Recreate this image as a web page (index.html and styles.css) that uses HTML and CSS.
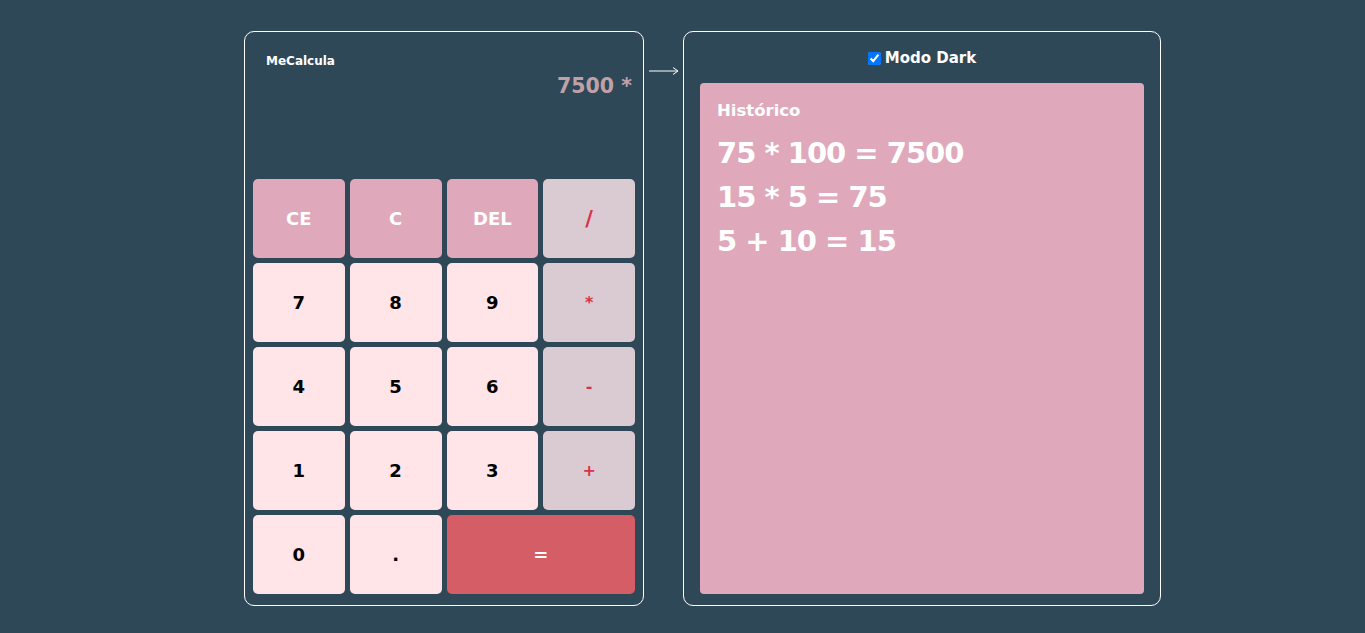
FILE: index.html
```html
<!DOCTYPE html>
<html lang="pt-BR">
<head>
<meta charset="utf-8">
<title>MeCalcula</title>
<link rel="stylesheet" href="styles.css">
</head>
<body>
<main class="page">
  <section class="calc">
    <div class="screen">
      <h1 class="brand">MeCalcula</h1>
      <div class="display">7500 *</div>
    </div>
    <div class="keys">
      <button class="key fn">CE</button>
      <button class="key fn">C</button>
      <button class="key fn">DEL</button>
      <button class="key op slash">/</button>
      <button class="key num">7</button>
      <button class="key num">8</button>
      <button class="key num">9</button>
      <button class="key op">*</button>
      <button class="key num">4</button>
      <button class="key num">5</button>
      <button class="key num">6</button>
      <button class="key op">-</button>
      <button class="key num">1</button>
      <button class="key num">2</button>
      <button class="key num">3</button>
      <button class="key op">+</button>
      <button class="key num">0</button>
      <button class="key num">.</button>
      <button class="key eq">=</button>
    </div>
  </section>
  <div class="arrow">
    <svg width="30" height="10" viewBox="0 0 30 10"><path d="M0 5H29M24 1.5L29 5L24 8.5" fill="none" stroke="#fff" stroke-width="1"/></svg>
  </div>
  <section class="side">
    <label class="mode"><input type="checkbox" checked> Modo Dark</label>
    <div class="history">
      <h2 class="history-title">Histórico</h2>
      <p class="entry">75 * 100 = 7500</p>
      <p class="entry">15 * 5 = 75</p>
      <p class="entry">5 + 10 = 15</p>
    </div>
  </section>
</main>
</body>
</html>
```
FILE: styles.css
```css
* { box-sizing: border-box; }
html, body { margin: 0; padding: 0; }
body {
  background: #2f4858;
  font-family: "DejaVu Sans", "Noto Sans", sans-serif;
  font-weight: bold;
  height: 633px;
  overflow: hidden;
}
.page {
  display: flex;
  align-items: flex-start;
  justify-content: center;
  padding: 31px 0 0 40px;
}
.calc {
  width: 400px;
  height: 575px;
  border: 1px solid #fff;
  border-radius: 10px;
  padding: 0 8px 11px 8px;
  display: flex;
  flex-direction: column;
}
.screen {
  flex: 1;
  display: flex;
  flex-direction: column;
  padding: 21px 3px 0 13px;
}
.brand {
  margin: 0;
  color: #fff;
  font-size: 12px;
  line-height: 16px;
}
.display {
  margin-top: 4px;
  text-align: right;
  color: #c0a1a7;
  font-size: 20.5px;
  line-height: 26px;
}
.keys {
  display: grid;
  grid-template-columns: repeat(4, 1fr);
  grid-auto-rows: 79px;
  gap: 5px;
}
.key {
  border: none;
  border-radius: 5px;
  font-family: inherit;
  font-weight: bold;
  font-size: 18px;
  padding: 0;
}
.fn { background: #e0a9bb; color: #fff; }
.op { background: #dacbd2; color: #d8324a; font-size: 16px; }
.op.slash { font-size: 21px; }
.num { background: #ffe4e8; color: #000; }
.eq { background: #d45d66; color: #fff; grid-column: span 2; }
.arrow {
  width: 39px;
  padding: 35px 0 0 5px;
  line-height: 0;
}
.side {
  width: 478px;
  height: 575px;
  border: 1px solid #fff;
  border-radius: 10px;
  padding: 0 16px 11px 16px;
  display: flex;
  flex-direction: column;
}
.mode {
  display: flex;
  align-items: center;
  justify-content: center;
  gap: 4px;
  height: 51px;
  padding-top: 1px;
  color: #fff;
  font-size: 15px;
}
.mode input {
  margin: 0;
  width: 13px;
  height: 13px;
}
.history {
  flex: 1;
  background: #e0a9bb;
  border-radius: 4px;
  padding: 17px 17px;
  color: #fff;
}
.history-title {
  margin: 0 0 9px 0;
  font-size: 16.5px;
  line-height: 22px;
}
.entry {
  margin: 0;
  font-size: 29px;
  letter-spacing: -1px;
  line-height: 44px;
}
```
